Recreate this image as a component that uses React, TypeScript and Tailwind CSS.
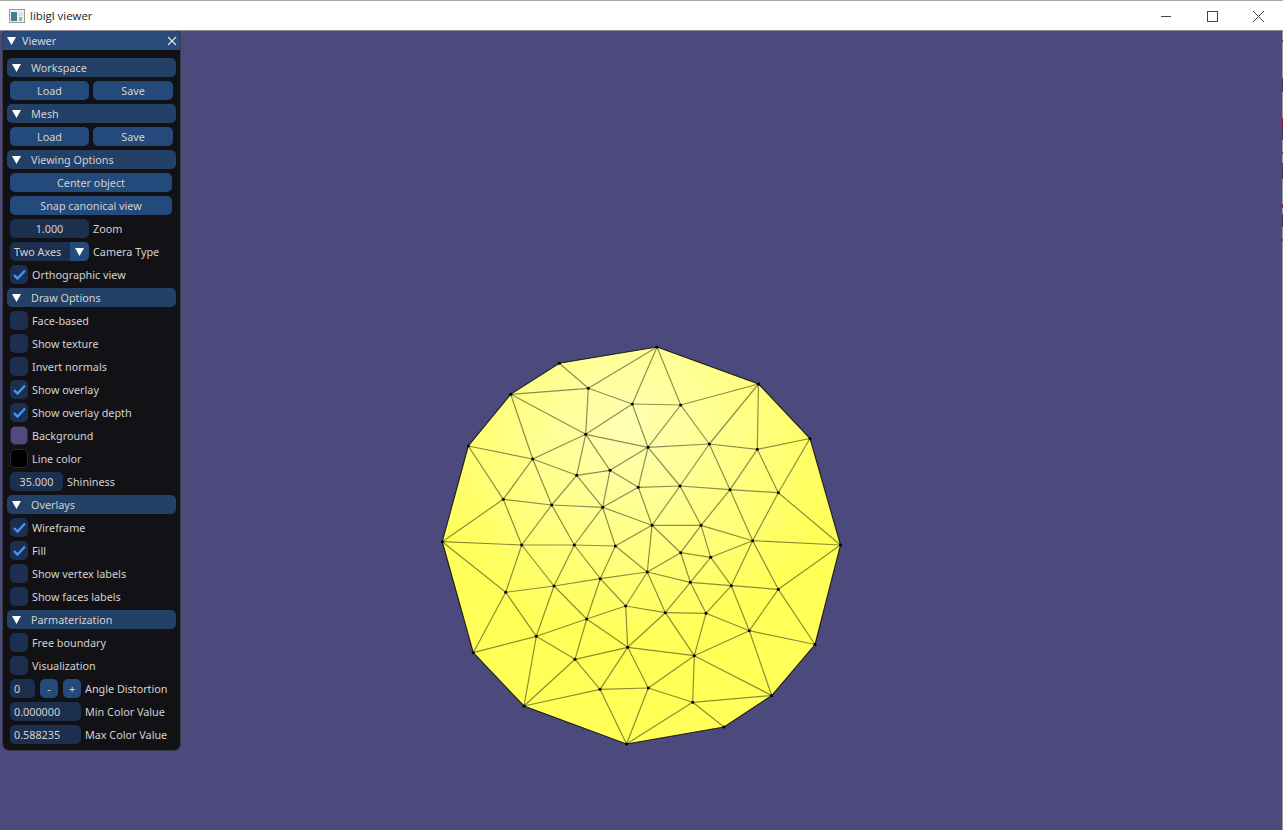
const V: Record<string, [number, number]> = {
  A: [657, 347], B: [758.5, 384], C: [810, 438.5], D: [840.5, 545], E: [815, 644.5], F: [771.7, 695.5],
  G: [724, 727], H: [626.5, 744], I: [524, 706], J: [473.3, 652.7], K: [442.3, 541.7], L: [468.3, 446],
  M: [510.7, 394.3], N: [559.3, 363.3],
  a: [588.3, 388.3], b: [632.3, 404], c: [585.7, 434.3], d: [648, 447.3], e: [532.7, 459], f: [576.7, 475.3],
  g: [610, 470.3], h: [638.3, 487.3], i: [503.3, 499.3], j: [551.7, 505], k: [602.7, 507.3], l: [521.7, 545],
  m: [574.3, 545], n: [615.3, 546], o: [680.7, 405], p: [709.3, 444], q: [757.3, 449.3], r: [680, 486],
  s: [730, 489.7], t: [778.3, 492.7], u: [652, 525.3], v: [701, 525.3], w: [752.7, 540.7], x: [647.3, 572],
  y: [600.3, 578.7], z: [554, 586], aa: [505.7, 592.3], ab: [625.7, 606], ac: [586.7, 619], ad: [536.3, 636.3],
  ae: [627.7, 647.3], af: [575, 659.3], ag: [600, 689.3], ah: [648.3, 688], ai: [680.7, 552.7], aj: [710.7, 557.3],
  ak: [690.3, 582.3], al: [731.3, 585.7], am: [778.3, 589.3], an: [665.3, 612.7], ao: [706, 613.3], ap: [749.3, 630.7],
  aq: [694.3, 655.7], ar: [692.7, 702.3],
};

const outline = "A B C D E F G H I J K L M N".split(" ");

const edges = `N-a a-M A-a a-b a-c A-b b-c b-d b-o M-c M-e c-d c-e c-f c-g e-f e-L e-i e-j f-g f-j f-k g-h g-k g-d
h-d h-k h-r h-u L-i i-K i-j i-l j-k j-l j-m k-m k-n K-l l-m m-n n-u k-u d-o d-p d-r A-o o-B o-p B-p B-q C-q C-t
q-p q-s q-t p-r p-s r-s r-u r-v s-t s-v s-w t-w t-D w-D w-v u-v u-x u-ai v-ai v-aj w-aj w-al w-am D-am E-am E-ap
am-al am-ap al-ap al-ak al-aj ak-aj ak-ai ak-x ak-an ak-ao al-ao ai-aj ai-x x-an x-y x-ab x-n an-ao an-aq an-ab an-ae
ao-aq ao-ap ap-aq ap-F aq-F aq-ar aq-ah aq-ae ar-F ar-G ar-ah ar-H ah-H ah-ae ah-ag ag-H ag-I ag-af ag-ae ae-af ae-ab
ae-ac ab-y ab-ac y-z y-ac y-m y-n z-m z-l z-aa z-ad z-ac aa-l aa-K aa-J aa-ad ad-J ad-I ad-af ad-ac af-I af-ac`
  .split(/\s+/)
  .map((e) => e.split("-"));

// sliver of the window behind, visible along the right edge
const strip = [
  "h-[9px] bg-[#999999]",
  "h-[2px] bg-[#444450]",
  "h-[36px] bg-[#999999]",
  "h-[14px] bg-[#3c3c68]",
  "h-[26px] bg-[#a09098]",
  "h-[12px] bg-[#8a2038]",
  "h-[10px] bg-[#3c3c68]",
  "h-[12px] bg-[#999999]",
  "h-[2px] bg-[#444450]",
  "h-[9px] bg-[#999999]",
  "h-[16px] bg-[#3c3c68]",
  "h-[25px] bg-[#999999]",
  "h-[4px] bg-[#8a2038]",
  "h-[6px] bg-[#999999]",
  "h-[13px] bg-[#3c3c68]",
  "h-[12px] bg-[#999999]",
  "h-[2px] bg-[#444450]",
  "flex-1 bg-[#999999]",
];

function Mesh() {
  return (
    <svg viewBox="0 31 1282 799" className="block h-full w-full">
      <defs>
        <radialGradient id="shade" gradientUnits="userSpaceOnUse" cx="628" cy="425" r="215">
          <stop offset="0" stopColor="#ffffb4" />
          <stop offset="0.55" stopColor="#ffff84" />
          <stop offset="1" stopColor="#ffff58" />
        </radialGradient>
      </defs>
      <polygon points={outline.map((k) => V[k].join(",")).join(" ")} fill="url(#shade)" />
      {edges.map(([p, q]) => (
        <line
          key={p + q}
          x1={V[p][0]}
          y1={V[p][1]}
          x2={V[q][0]}
          y2={V[q][1]}
          stroke="#000"
          strokeOpacity={0.45}
          strokeWidth={1.2}
        />
      ))}
      <polygon
        points={outline.map((k) => V[k].join(",")).join(" ")}
        fill="none"
        stroke="#000"
        strokeOpacity={0.8}
        strokeWidth={1.1}
      />
      {Object.keys(V).map((k) => (
        <circle key={k} cx={V[k][0]} cy={V[k][1]} r={1.5} fill="#000" />
      ))}
    </svg>
  );
}

function Arrow({ className }: { className: string }) {
  return (
    <svg width="9" height="8" viewBox="0 0 9 8" className={className}>
      <polygon points="0,0 9,0 4.5,8" fill="#fff" />
    </svg>
  );
}

function Label({ children, className = "" }: { children: string; className?: string }) {
  return <span className={`pt-[1px] ${className}`}>{children}</span>;
}

function Header({ label }: { label: string }) {
  return (
    <div className="flex h-[19px] items-center rounded-[5px] bg-[#234067]">
      <Arrow className="ml-[5px]" />
      <Label className="ml-[10px]">{label}</Label>
    </div>
  );
}

function Buttons({ left, right }: { left: string; right: string }) {
  return (
    <div className="flex gap-[4px] pl-[3px]">
      <div className="flex h-[19px] w-[79px] items-center justify-center rounded-[5px] bg-[#234a7a]">
        <Label>{left}</Label>
      </div>
      <div className="flex h-[19px] w-[80px] items-center justify-center rounded-[5px] bg-[#234a7a]">
        <Label>{right}</Label>
      </div>
    </div>
  );
}

function Wide({ label }: { label: string }) {
  return (
    <div className="ml-[3px] flex h-[19px] w-[162px] items-center justify-center rounded-[5px] bg-[#234a7a]">
      <Label>{label}</Label>
    </div>
  );
}

function Check({ label, on = false }: { label: string; on?: boolean }) {
  return (
    <div className="flex h-[19px] items-center pl-[3px]">
      <div className="flex h-[19px] w-[18px] items-center justify-center rounded-[5px] bg-[#1d2f4e]">
        {on && (
          <svg width="13" height="11" viewBox="0 0 13 11">
            <polyline points="1,6 4.5,9.5 12,1.5" fill="none" stroke="#4296fa" strokeWidth="2.4" />
          </svg>
        )}
      </div>
      <Label className="ml-[4px]">{label}</Label>
    </div>
  );
}

function Swatch({ label, color }: { label: string; color: string }) {
  return (
    <div className="flex h-[19px] items-center pl-[3px]">
      <div className={`h-[19px] w-[18px] rounded-[5px] border border-[#2a2a34] ${color}`} />
      <Label className="ml-[4px]">{label}</Label>
    </div>
  );
}

function Field({ value, label, width, center = false }: { value: string; label: string; width: string; center?: boolean }) {
  return (
    <div className="flex h-[19px] items-center pl-[3px]">
      <div
        className={`flex h-[19px] items-center rounded-[5px] bg-[#1d2f4e] ${width} ${center ? "justify-center" : "pl-[4px]"}`}
      >
        <Label>{value}</Label>
      </div>
      <Label className="ml-[4px]">{label}</Label>
    </div>
  );
}

function Panel() {
  return (
    <div className="absolute left-[2px] top-0 flex h-[720px] w-[179px] flex-col rounded-b-[7px] rounded-t-[5px] border-x border-b border-[#3c3c48] bg-[#121216] text-[10.8px] text-[#d2d2d2] [font-family:'Noto_Sans',sans-serif]">
      <div className="flex h-[19px] shrink-0 items-center rounded-t-[5px] bg-[#294a7a] pl-[4px] pr-[3px]">
        <Arrow className="" />
        <Label className="ml-[6px] text-[#d4d8e0]">Viewer</Label>
        <svg width="10" height="10" viewBox="0 0 10 10" className="ml-auto">
          <path d="M1 1 L9 9 M9 1 L1 9" stroke="#dfe4ec" strokeWidth="1.2" />
        </svg>
      </div>
      <div className="flex flex-col gap-[4px] pl-[4px] pr-[4px] pt-[8px]">
        <Header label="Workspace" />
        <Buttons left="Load" right="Save" />
        <Header label="Mesh" />
        <Buttons left="Load" right="Save" />
        <Header label="Viewing Options" />
        <Wide label="Center object" />
        <Wide label="Snap canonical view" />
        <Field value="1.000" label="Zoom" width="w-[79px]" center />
        <div className="flex h-[19px] items-center pl-[3px]">
          <div className="flex h-[19px] w-[79px] items-center overflow-hidden rounded-[5px] bg-[#1d2f4e]">
            <Label className="ml-[4px] flex-1">Two Axes</Label>
            <div className="flex h-[19px] w-[19px] items-center justify-center bg-[#234a7a]">
              <Arrow className="" />
            </div>
          </div>
          <Label className="ml-[4px]">Camera Type</Label>
        </div>
        <Check label="Orthographic view" on />
        <Header label="Draw Options" />
        <Check label="Face-based" />
        <Check label="Show texture" />
        <Check label="Invert normals" />
        <Check label="Show overlay" on />
        <Check label="Show overlay depth" on />
        <Swatch label="Background" color="bg-[#4f4a80]" />
        <Swatch label="Line color" color="bg-black" />
        <Field value="35.000" label="Shininess" width="w-[53px]" center />
        <Header label="Overlays" />
        <Check label="Wireframe" on />
        <Check label="Fill" on />
        <Check label="Show vertex labels" />
        <Check label="Show faces labels" />
        <Header label="Parmaterization" />
        <Check label="Free boundary" />
        <Check label="Visualization" />
        <div className="flex h-[19px] items-center pl-[3px]">
          <div className="flex h-[19px] w-[25px] items-center rounded-[5px] bg-[#1d2f4e] pl-[4px]">
            <Label>0</Label>
          </div>
          <div className="ml-[5px] flex h-[19px] w-[18px] items-center justify-center rounded-[5px] bg-[#234a7a]">
            <Label>-</Label>
          </div>
          <div className="ml-[5px] flex h-[19px] w-[18px] items-center justify-center rounded-[5px] bg-[#234a7a]">
            <Label>+</Label>
          </div>
          <Label className="ml-[4px]">Angle Distortion</Label>
        </div>
        <Field value="0.000000" label="Min Color Value" width="w-[71px]" />
        <Field value="0.588235" label="Max Color Value" width="w-[71px]" />
      </div>
    </div>
  );
}

export default function App() {
  return (
    <div className="flex h-[830px] w-[1283px] flex-col overflow-hidden bg-[#4c4a7c]">
      {/* Title bar */}
      <div className="flex h-[31px] shrink-0 items-center border-b border-t border-b-[#8a8a98] border-t-[#a8a8a8] bg-white pl-[9px] text-[11.4px] text-[#1a1a1a] [font-family:'Open_Sans',sans-serif]">
        <svg width="16" height="14" viewBox="0 0 16 14">
          <rect x="0.5" y="0.5" width="15" height="13" fill="#f0f0f0" stroke="#9a9a9a" />
          <rect x="2" y="3" width="6" height="9" fill="#3f7f8f" />
          <rect x="9" y="3" width="5" height="4" fill="#d8e4e8" />
          <rect x="10" y="8" width="3" height="4" fill="#8fb8a0" />
        </svg>
        <span className="ml-[5px] pt-[1px]">libigl viewer</span>
        <div className="ml-auto flex items-center">
          <svg width="46" height="12" viewBox="0 0 46 12">
            <path d="M17 6.5 H27" stroke="#444" strokeWidth="1" />
          </svg>
          <svg width="46" height="12" viewBox="0 0 46 12">
            <rect x="17.5" y="1.5" width="10" height="10" fill="none" stroke="#444" strokeWidth="1" />
          </svg>
          <svg width="46" height="12" viewBox="0 0 46 12" className="mr-[1px]">
            <path d="M17 1 L28 12 M28 1 L17 12" stroke="#444" strokeWidth="1" />
          </svg>
        </div>
      </div>
      <div className="flex min-h-0 flex-1">
        {/* Viewport */}
        <div className="relative w-[1282px] shrink-0">
          <Mesh />
          <Panel />
        </div>
        <div className="flex w-[1px] flex-col">
          {strip.map((c, i) => (
            <div key={i} className={c} />
          ))}
        </div>
      </div>
    </div>
  );
}
